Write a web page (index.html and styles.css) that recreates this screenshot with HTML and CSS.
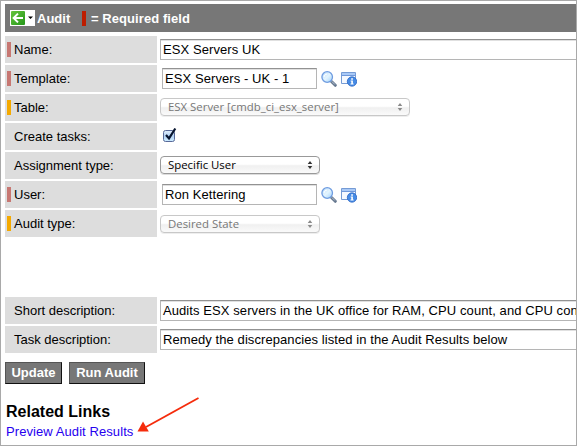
FILE: index.html
```html
<!DOCTYPE html>
<html lang="en">
<head>
<meta charset="utf-8">
<title>Audit</title>
<link rel="stylesheet" href="styles.css">
</head>
<body>
<svg width="0" height="0" class="defs">
  <defs>
    <linearGradient id="lens" x1="0" y1="0" x2="1" y2="1"><stop offset="0" stop-color="#b9dcfb"/><stop offset=".5" stop-color="#e4f5ff"/><stop offset="1" stop-color="#9fd0fa"/></linearGradient>
    <linearGradient id="green" x1="0" y1="0" x2="1" y2="1"><stop offset="0" stop-color="#65c53c"/><stop offset="1" stop-color="#25961a"/></linearGradient>
    <linearGradient id="box" x1="0" y1="0" x2="0" y2="1"><stop offset="0" stop-color="#e3effc"/><stop offset=".5" stop-color="#b2d2f5"/><stop offset="1" stop-color="#cdecff"/></linearGradient>
    <symbol id="search" viewBox="0 0 16 16">
      <path d="M10.500 10.500l3.800 3.800" stroke="#66788f" stroke-width="3" stroke-linecap="round"/>
      <path d="M10.8 10.4l3.100 3.100" stroke="#b9c5d5" stroke-width="1"/>
      <circle cx="6.2" cy="6" r="5.300" fill="url(#lens)" stroke="#6f9ce0" stroke-width="1.300"/>
      <path d="M3 6a3.2 3.2 0 0 1 3-3" fill="none" stroke="#fff" stroke-width="1"/>
    </symbol>
    <symbol id="info" viewBox="0 0 16 16">
      <path d="M.5 1.500h14v11H.5z" fill="#f5f9ff" stroke="#759bd5"/>
      <path d="M1 2h13v2H1z" fill="#a9c9f6"/><path d="M.5 4.500h14" stroke="#6f98da"/>
      <circle cx="11" cy="10.500" r="4.700" fill="#468be5" stroke="#2965c3" stroke-width=".8"/>
      <path d="M10.2 7.300h1.700v1.500h-1.700zM9.600 9.600h2.300v3h.7v1H9.500v-1h.8v-2h-.7z" fill="#fff"/>
    </symbol>
    <symbol id="sort" viewBox="0 0 6 8"><path d="M3 0l2.300 3H.7zM3 8L.7 5h4.600z" fill="currentColor"/></symbol>
  </defs>
</svg>
<main class="frame">
  <header class="bar">
    <span class="back">
      <svg width="25" height="16" viewBox="0 0 25 16"><path d="M0 0h25v16H0z" fill="#fff"/><rect x="1" y="1" width="14" height="14" rx="1" fill="url(#green)"/><path d="M13 8H4M8 3.600L3.600 8 8 12.400" fill="none" stroke="#fff" stroke-width="2"/><path d="M18 6.500h5L20.500 9z" fill="#000"/></svg>
    </span>
    <span class="title">Audit</span>
    <i class="key"></i>
    <span class="legend">= Required field</span>
  </header>
  <form class="rows">
    <div class="row"><label class="label red">Name:</label><div class="input wide">ESX Servers UK</div></div>
    <div class="row"><label class="label red">Template:</label><div class="input ref">ESX Servers - UK - 1</div><svg class="icon"><use href="#search"/></svg><svg class="icon"><use href="#info"/></svg></div>
    <div class="row"><label class="label amber">Table:</label><div class="select long disabled"><span>ESX Server [cmdb_ci_esx_server]</span><svg class="sort"><use href="#sort"/></svg></div></div>
    <div class="row"><label class="label">Create tasks:</label><svg class="check" width="15" height="16" viewBox="0 0 15 16"><rect x=".5" y="3.500" width="11" height="11" rx="2" fill="url(#box)" stroke="#586998"/><path d="M3 8l3 3.400L12.300 1.500" fill="none" stroke="#07142f" stroke-width="2.200"/></svg></div>
    <div class="row"><label class="label">Assignment type:</label><div class="select"><span>Specific User</span><svg class="sort"><use href="#sort"/></svg></div></div>
    <div class="row"><label class="label red">User:</label><div class="input ref">Ron Kettering</div><svg class="icon"><use href="#search"/></svg><svg class="icon"><use href="#info"/></svg></div>
    <div class="row"><label class="label amber">Audit type:</label><div class="select disabled lower"><span>Desired State</span><svg class="sort"><use href="#sort"/></svg></div></div>
    <div class="row gap"><label class="label">Short description:</label><div class="input wide">Audits ESX servers in the UK office for RAM, CPU count, and CPU con</div></div>
    <div class="row"><label class="label">Task description:</label><div class="input wide">Remedy the discrepancies listed in the Audit Results below</div></div>
  </form>
  <div class="buttons"><button class="update">Update</button><button class="run">Run Audit</button></div>
  <h2 class="heading">Related Links</h2>
  <a class="link">Preview Audit Results</a>
  <svg class="arrow" width="66" height="38" viewBox="0 0 66 38"><path d="M62.500 2L10 31" stroke="#f52c0c" stroke-width="1.900"/><path d="M1.500 35.500L7 25.500 12.800 35.500z" fill="#f52c0c"/></svg>
</main>
</body>
</html>
```
FILE: styles.css
```css
* { box-sizing: border-box; }
body { margin: 0; background: #fff; color: #000; font: 13px/15px "Liberation Sans", Arial, sans-serif; }
.defs { position: absolute; }
.frame { position: relative; width: 577px; height: 446px; border: 1px solid #a9a9a9; padding: 3px 0 0 4px; overflow: hidden; }
.bar { height: 28px; background: #777; color: #fff; display: flex; align-items: center; padding-left: 5px; font-weight: bold; white-space: nowrap; }
.back { height: 16px; }
.back svg { display: block; }
.title { width: 47px; padding-left: 2px; }
.key { width: 4px; height: 15px; background: #bd1d00; margin-right: 5px; }
.legend { letter-spacing: .07px; }
.rows { padding-top: 4px; }
.row { display: flex; height: 27px; margin-bottom: 2px; align-items: flex-start; white-space: nowrap; }
.gap { margin-top: 60px; }
.label { width: 152px; height: 27px; flex: none; background: #ddd; padding: 6px 0 0 9px; margin-right: 3px; }
.red, .amber { background-image: linear-gradient(#c77772, #c77772); background-size: 4px 15px; background-position: 2px 6px; background-repeat: no-repeat; }
.amber { background-image: linear-gradient(#f4a900, #f4a900); }
.input { height: 21px; margin-top: 3px; border: 1px solid #b5b5b5; border-top-color: #929292; box-shadow: inset 0 1px #e0e0e0; background: #fff; padding: 2px 0 0 2px; line-height: 15px; letter-spacing: .08px; overflow: hidden; }
.wide { flex: 1; border-right: 0; }
.ref { width: 155px; margin-left: 2px; }
.icon { width: 16px; height: 16px; margin: 6px 0 0 4px; }
.select { width: 160px; height: 18px; margin-top: 4px; border: 1px solid #999; border-radius: 4px; background: linear-gradient(#fff 45%, #f0f0f0 55%, #fafafa); display: flex; align-items: center; justify-content: space-between; padding: 0 6px 0 7px; font: 500 11.4px/14px "Open Sans", "Noto Sans", sans-serif; box-shadow: 0 1px #ddd; }
.long { width: 250px; }
.disabled { border-color: #c8c8c8; color: #777; box-shadow: 0 1px #eee; }
.lower { margin-top: 5px; }
.sort { width: 6px; height: 8px; color: #333; }
.disabled .sort { color: #8b8b8b; }
.check { margin: 4px 0 0 3px; }
.buttons { display: flex; gap: 7px; margin-top: 9px; }
button { height: 22px; padding: 0 0 2px; border: 1px solid #555; border-right-color: #111; border-bottom-color: #111; background: #777; color: #fff; font: bold 13px/15px "Liberation Sans", Arial, sans-serif; white-space: nowrap; }
.update { width: 57px; }
.run { width: 76px; }
.heading { margin: 19px 0 0 1px; font-size: 16px; line-height: 18px; }
.link { display: block; width: max-content; margin: 3px 0 0 1px; color: #2600ef; letter-spacing: .08px; }
.arrow { position: absolute; left: 135px; top: 395px; }
```
